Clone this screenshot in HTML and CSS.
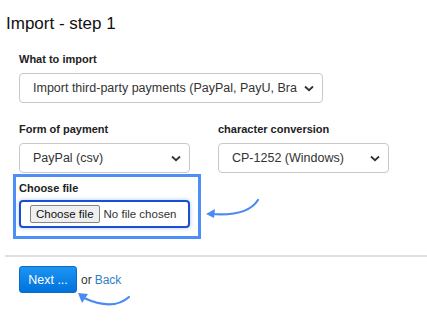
FILE: index.html
```html
<!DOCTYPE html>
<html lang="en">
<head>
    <meta charset="UTF-8">
    <title>Import - step 1</title>
    <link rel="stylesheet" href="styles.css">
</head>
<body>

    <div class="page">
        <h1>Import - step 1</h1>

        <div class="form">
            <div class="field">
                <label>What to import</label>
                <div class="select select-wide">
                    <span class="select-text">Import third-party payments (PayPal, PayU, Bra</span>
                    <svg class="chevron" width="10" height="7" viewBox="0 0 10 7"><path d="M1 1.5 L5 5.2 L9 1.5" fill="none" stroke="#333" stroke-width="1.8"/></svg>
                </div>
            </div>

            <div class="row">
                <div class="field">
                    <label>Form of payment</label>
                    <div class="select select-half">
                        <span class="select-text">PayPal (csv)</span>
                        <svg class="chevron" width="10" height="7" viewBox="0 0 10 7"><path d="M1 1.5 L5 5.2 L9 1.5" fill="none" stroke="#333" stroke-width="1.8"/></svg>
                    </div>
                </div>
                <div class="field">
                    <label>character conversion</label>
                    <div class="select select-half">
                        <span class="select-text">CP-1252 (Windows)</span>
                        <svg class="chevron" width="10" height="7" viewBox="0 0 10 7"><path d="M1 1.5 L5 5.2 L9 1.5" fill="none" stroke="#333" stroke-width="1.8"/></svg>
                    </div>
                </div>
            </div>

            <!-- highlighted file field -->
            <div class="file-highlight">
                <label>Choose file</label>
                <div class="file-box">
                    <span class="file-btn">Choose file</span>
                    <span class="file-name">No file chosen</span>
                </div>
                <svg class="arrow arrow-file" width="60" height="24" viewBox="0 0 60 24">
                    <path d="M53 2 C46 13 32 18 6 16" fill="none" stroke="#4a8af4" stroke-width="2.2" stroke-linecap="round"/>
                    <path d="M1 16 L10 11 L9 20 Z" fill="#4a8af4"/>
                </svg>
            </div>
        </div>

        <hr class="divider">

        <div class="actions">
            <button class="next-btn">Next ...</button>
            <span class="or">or</span>
            <a href="#" class="back-link">Back</a>
            <svg class="arrow arrow-next" width="58" height="22" viewBox="0 0 58 22">
                <path d="M53 6 C44 14 30 17 8 7" fill="none" stroke="#4a8af4" stroke-width="2.2" stroke-linecap="round"/>
                <path d="M2 2 L12 3 L6 12 Z" fill="#4a8af4"/>
            </svg>
        </div>
    </div>

</body>
</html>
```

FILE: styles.css
```css
body {
    font-family: 'Liberation Sans', Arial, sans-serif;
    background-color: #ffffff;
    color: #222;
    margin: 0;
    padding: 0;
}

.page {
    box-sizing: border-box;
    min-height: 328px;
    padding: 13px 0 0 5px;
}

h1 {
    font-size: 17px;
    font-weight: normal;
    color: #111;
    margin: 0 0 0 1px;
    line-height: 21px;
}

.form {
    padding: 19px 0 0 14px;
}

.field label,
.file-highlight label {
    display: block;
    font-size: 11px;
    font-weight: bold;
    color: #222;
    line-height: 13px;
    margin-bottom: 7px;
}

.row {
    display: flex;
    gap: 28px;
    margin-top: 20px;
}

.select {
    display: flex;
    align-items: center;
    justify-content: space-between;
    box-sizing: border-box;
    height: 30px;
    padding: 0 8px 0 13px;
    border: 1px solid #c9c9c9;
    border-radius: 4px;
    background-color: #fff;
    font-size: 12.5px;
    color: #333;
}

.select-wide {
    width: 304px;
}

.select-half {
    width: 171px;
}

.select-text {
    white-space: nowrap;
}

.chevron {
    flex: none;
}

.file-highlight {
    position: relative;
    box-sizing: border-box;
    width: 188px;
    margin: 1px 0 0 -6px;
    padding: 5px 8px 8px 3px;
    border: 3px solid #4d8ef7;
}

.file-highlight label {
    margin-bottom: 5px;
}

.file-box {
    display: flex;
    align-items: center;
    gap: 4px;
    box-sizing: border-box;
    width: 171px;
    height: 28px;
    padding: 0 9px;
    border: 2px solid #1a4fcf;
    border-radius: 4px;
    box-shadow: 0 0 4px rgba(77, 142, 247, 0.45);
    font-size: 11.5px;
    color: #333;
    white-space: nowrap;
}

.file-btn {
    flex: none;
    padding: 1px 5px;
    background-color: #efefef;
    border: 1px solid #858585;
    border-radius: 2px;
    color: #111;
    line-height: 14px;
}

.file-name {
    flex: none;
}

.divider {
    border: none;
    border-top: 2px solid #e0e0e0;
    margin: 16px 0 0 0;
}

.actions {
    position: relative;
    display: flex;
    align-items: center;
    gap: 3px;
    padding: 9px 0 0 14px;
}

.next-btn {
    box-sizing: border-box;
    width: 58px;
    height: 27px;
    padding: 0;
    font-family: 'Liberation Sans', Arial, sans-serif;
    font-size: 12.5px;
    color: #fff;
    background: linear-gradient(#1d94f2, #0072dc);
    border: 1px solid #0a6ac8;
    border-radius: 3px;
}

.or {
    font-size: 12px;
    color: #333;
    margin-left: 1px;
}

.back-link {
    font-size: 12px;
    color: #2f7fc8;
    text-decoration: none;
}

.arrow {
    position: absolute;
}

.arrow-file {
    left: 189px;
    top: 21px;
}

.arrow-next {
    left: 71px;
    top: 34px;
}
```
